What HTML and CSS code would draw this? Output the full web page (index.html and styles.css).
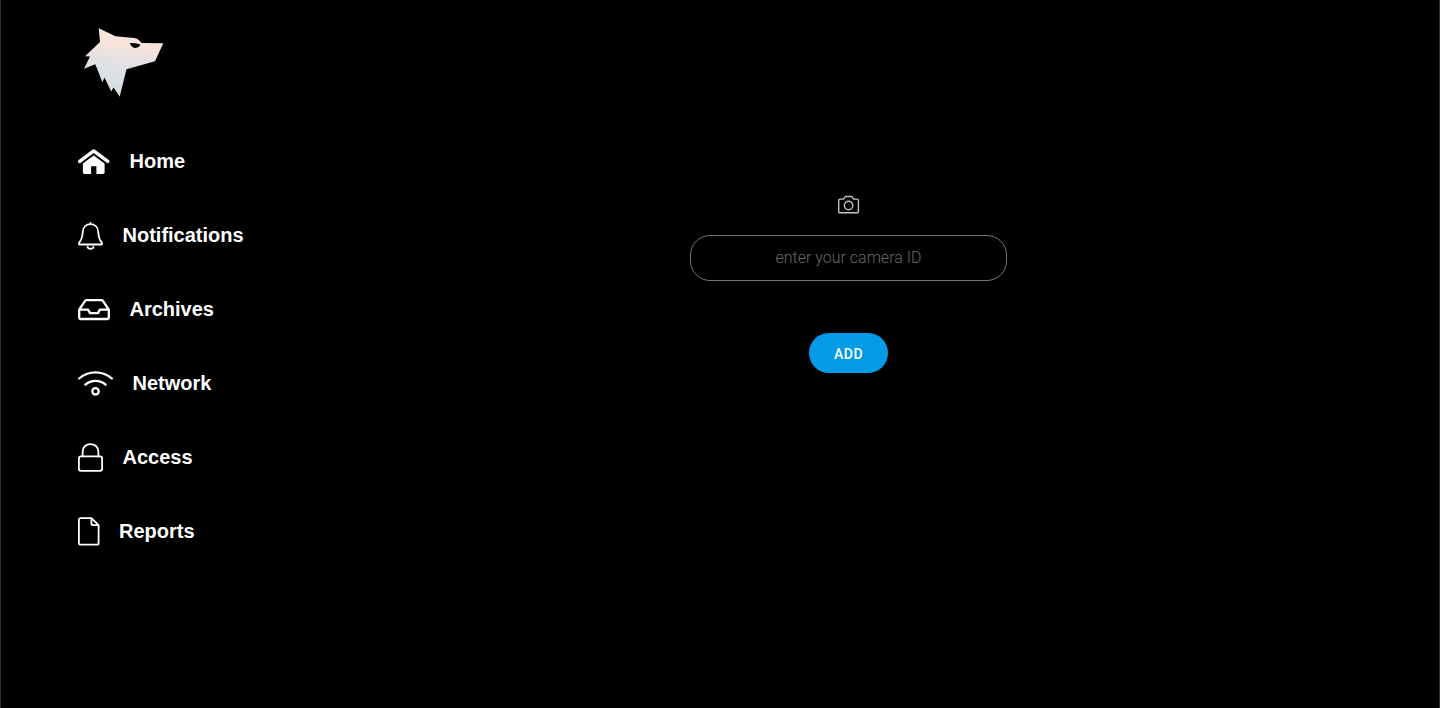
FILE: index.html
```html
<!DOCTYPE html>
<html lang="en">
<head>
<meta charset="utf-8">
<title>Add camera</title>
<link rel="stylesheet" href="styles.css">
</head>
<body>
<div class="app">
  <aside class="sidebar">
    <svg class="logo" width="88" height="76" viewBox="0 0 88 76">
      <defs>
        <linearGradient id="fur" x1="0.55" y1="0" x2="0.4" y2="1">
          <stop offset="0" stop-color="#fbe8e0"/>
          <stop offset="0.25" stop-color="#f6e3dc"/>
          <stop offset="0.48" stop-color="#e4e1e3"/>
          <stop offset="0.7" stop-color="#dbe1e5"/>
          <stop offset="1" stop-color="#d6dee3"/>
        </linearGradient>
      </defs>
      <path fill="url(#fur)" d="M20.7 4.3 37.5 12.2 56 13.9C59.5 14.3 62 16.5 63.5 19L85.3 19.2 77 37.3 48.5 45.3 41.7 72.7 35.5 63.6 33.2 67.6 26.5 53.5 24.4 58.3 17.3 40.2 6 44.8 12 32.6 7 32.2 22 18z"/>
      <path fill="#050505" d="M51.8 18.9C55 19 59.5 19.2 62.2 20.6 61.6 24.8 53.5 25.8 51.8 18.9z"/>
    </svg>
    <nav class="menu">
      <a class="item">
        <svg width="32" height="32" viewBox="0 0 32 32" fill="#fff">
          <path d="M1.7 16.4 15.7 5.9 29.8 16.4" fill="none" stroke="#fff" stroke-width="3.3" stroke-linecap="round" stroke-linejoin="round"/>
          <path d="M4.9 18.6 15.7 10.5 26.6 18.6V27.6Q26.6 29 25.2 29H18.4V21.2H13.1V29H6.3Q4.9 29 4.9 27.6z"/>
        </svg>
        <span>Home</span>
      </a>
      <a class="item">
        <svg width="25" height="32" viewBox="0 0 25 32" class="line">
          <path d="M12.5 3.8V5.2M12.5 5.2C8 5.2 5.1 8.4 4.8 12.7 4.5 17.1 4 20.3 1.5 23.2 .4 24.6 .8 25.5 2.2 25.5H22.8C24.2 25.5 24.6 24.6 23.5 23.2 21 20.3 20.5 17.1 20.2 12.7 19.9 8.4 17 5.2 12.5 5.2zM9.6 27.8C10.1 30.4 14.9 30.4 15.4 27.8"/>
        </svg>
        <span>Notifications</span>
      </a>
      <a class="item">
        <svg width="32" height="32" viewBox="0 0 32 32" class="line bold">
          <path d="M1.2 16.6 7.1 7.9Q7.7 7.1 8.7 7.1H23.3Q24.3 7.1 24.9 7.9L30.8 16.6V24.3Q30.8 26 29.1 26H2.9Q1.2 26 1.2 24.3zM1.2 16.6H10.1L12 20.1H20L21.9 16.6H30.8"/>
        </svg>
        <span>Archives</span>
      </a>
      <a class="item">
        <svg width="35" height="32" viewBox="0 0 35 32" class="line bold">
          <path d="M1.2 11.5C10.2 3.2 24.8 3.2 33.8 11.5M7.4 17.7C13.1 12.6 21.9 12.6 27.6 17.7"/>
          <circle cx="17.5" cy="24.3" r="3.2"/>
        </svg>
        <span>Network</span>
      </a>
      <a class="item">
        <svg width="25" height="32" viewBox="0 0 25 32" class="line">
          <rect x=".9" y="15.4" width="23.2" height="14.4" rx="2"/>
          <path d="M4.6 15.4V10.9C4.6 .5 20.4 .5 20.4 10.9V15.4"/>
        </svg>
        <span>Access</span>
      </a>
      <a class="item">
        <svg width="21.5" height="32" viewBox="0 0 21.5 32" class="line">
          <path d="M2.4 3.2H13.4L20.6 10.1V28Q20.6 29.7 18.9 29.7H2.6Q.9 29.7 .9 28V4.8Q.9 3.2 2.4 3.2zM13.4 3.2V8.5Q13.4 10.1 15 10.1H20.6"/>
        </svg>
        <span>Reports</span>
      </a>
    </nav>
  </aside>
  <main class="content">
    <svg class="camera" width="22" height="20" viewBox="0 0 22 20">
      <path d="M1.9 4.1H5.6L7.2 1.5H14L15.6 4.1H19.2Q20.4 4.1 20.4 5.3V16.6Q20.4 17.8 19.2 17.8H1.9Q.7 17.8 .7 16.6V5.3Q.7 4.1 1.9 4.1z"/>
      <circle cx="10.6" cy="10.5" r="4.2"/>
    </svg>
    <input class="camera-id" type="text" placeholder="enter your camera ID">
    <button class="add" type="button">ADD</button>
  </main>
</div>
</body>
</html>
```
FILE: styles.css
```css
* {
  box-sizing: border-box;
}

body {
  margin: 0;
  background: #000;
  color: #fff;
}

.app {
  display: flex;
  height: 708px;
  overflow: hidden;
  border-left: 1px solid #303030;
  border-right: 1px solid #303030;
}

.sidebar {
  width: 256px;
  padding: 24px 0 0 77px;
}

.logo {
  display: block;
}

.menu {
  display: flex;
  flex-direction: column;
  margin-top: 24px;
}

.item {
  display: flex;
  align-items: center;
  gap: 19.5px;
  height: 74px;
  font: bold 20px/24px "Liberation Sans", Arial, sans-serif;
}

.item svg {
  flex: none;
}

.line {
  fill: none;
  stroke: #fff;
  stroke-width: 1.8;
  stroke-linecap: round;
  stroke-linejoin: round;
}

.line.bold {
  stroke-width: 2.3;
}

.content {
  flex: 1;
  display: flex;
  flex-direction: column;
  align-items: center;
  padding: 195px 0 0 1px;
}

.camera {
  fill: none;
  stroke: #c4c4c4;
  stroke-width: 1.4;
  stroke-linejoin: round;
}

.camera-id {
  width: 317px;
  height: 46px;
  margin: 20px 0 52px;
  padding: 0 20px 2px;
  border: 1px solid #767676;
  border-radius: 20px;
  background: #000;
  color: #fff;
  font: 300 16px Roboto, sans-serif;
  text-align: center;
}

.camera-id::placeholder {
  color: #686868;
}

.add {
  width: 79px;
  height: 40px;
  padding: 2px 0 0;
  border: 0;
  border-radius: 20px;
  background: #039be5;
  color: #fff;
  font: 500 14px Roboto, sans-serif;
  letter-spacing: 0.5px;
}
```
